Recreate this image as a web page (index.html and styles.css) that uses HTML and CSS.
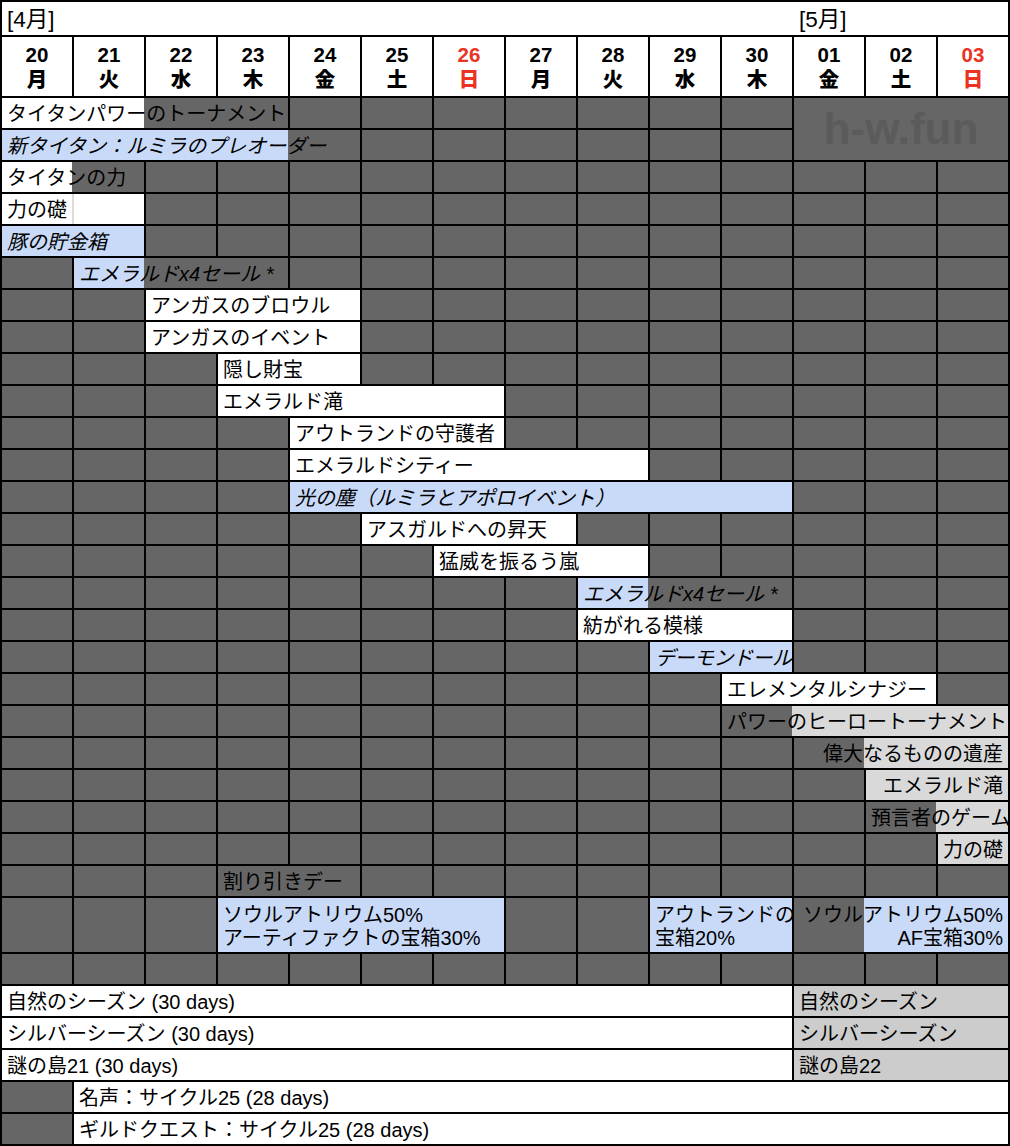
FILE: index.html
```html
<!DOCTYPE html>
<html lang="ja">
<head>
<meta charset="utf-8">
<title>イベントカレンダー</title>
<link rel="stylesheet" href="styles.css">
</head>
<body>
<div class="sheet">
  <div class="month c14"><span class="mtxt">[4月]</span><span class="mtxt">[5月]</span></div>

  <div class="day"><b>20</b><b>月</b></div>
  <div class="day"><b>21</b><b>火</b></div>
  <div class="day"><b>22</b><b>水</b></div>
  <div class="day"><b>23</b><b>木</b></div>
  <div class="day"><b>24</b><b>金</b></div>
  <div class="day"><b>25</b><b>土</b></div>
  <div class="day sun"><b>26</b><b>日</b></div>
  <div class="day"><b>27</b><b>月</b></div>
  <div class="day"><b>28</b><b>火</b></div>
  <div class="day"><b>29</b><b>水</b></div>
  <div class="day"><b>30</b><b>木</b></div>
  <div class="day"><b>01</b><b>金</b></div>
  <div class="day"><b>02</b><b>土</b></div>
  <div class="day sun"><b>03</b><b>日</b></div>

  <!-- row 1 -->
  <div class="cell ov cw s142 c4">タイタンパワーのトーナメント</div>
  <div class="d"></div><div class="d"></div><div class="d"></div><div class="d"></div><div class="d"></div><div class="d"></div><div class="d"></div>
  <div class="d mark c3 r2">h-w.fun</div>

  <!-- row 2 -->
  <div class="cell ov cb s286 c5 it">新タイタン：ルミラのプレオーダー</div>
  <div class="d"></div><div class="d"></div><div class="d"></div><div class="d"></div><div class="d"></div><div class="d"></div>

  <!-- row 3 -->
  <div class="cell ov cw s70 c2">タイタンの力</div>
  <div class="d"></div><div class="d"></div><div class="d"></div><div class="d"></div><div class="d"></div><div class="d"></div><div class="d"></div><div class="d"></div><div class="d"></div><div class="d"></div><div class="d"></div><div class="d"></div>

  <!-- row 4 -->
  <div class="cell split c2">力の礎</div>
  <div class="d"></div><div class="d"></div><div class="d"></div><div class="d"></div><div class="d"></div><div class="d"></div><div class="d"></div><div class="d"></div><div class="d"></div><div class="d"></div><div class="d"></div><div class="d"></div>

  <!-- row 5 -->
  <div class="cell b c2 it">豚の貯金箱</div>
  <div class="d"></div><div class="d"></div><div class="d"></div><div class="d"></div><div class="d"></div><div class="d"></div><div class="d"></div><div class="d"></div><div class="d"></div><div class="d"></div><div class="d"></div><div class="d"></div>

  <!-- row 6 -->
  <div class="d"></div>
  <div class="cell ov cb s70 c3 it">エメラルドx4セール *</div>
  <div class="d"></div><div class="d"></div><div class="d"></div><div class="d"></div><div class="d"></div><div class="d"></div><div class="d"></div><div class="d"></div><div class="d"></div><div class="d"></div>

  <!-- row 7 -->
  <div class="d"></div><div class="d"></div>
  <div class="cell w c3">アンガスのブロウル</div>
  <div class="d"></div><div class="d"></div><div class="d"></div><div class="d"></div><div class="d"></div><div class="d"></div><div class="d"></div><div class="d"></div><div class="d"></div>

  <!-- row 8 -->
  <div class="d"></div><div class="d"></div>
  <div class="cell w c3">アンガスのイベント</div>
  <div class="d"></div><div class="d"></div><div class="d"></div><div class="d"></div><div class="d"></div><div class="d"></div><div class="d"></div><div class="d"></div><div class="d"></div>

  <!-- row 9 -->
  <div class="d"></div><div class="d"></div><div class="d"></div>
  <div class="cell w c2">隠し財宝</div>
  <div class="d"></div><div class="d"></div><div class="d"></div><div class="d"></div><div class="d"></div><div class="d"></div><div class="d"></div><div class="d"></div><div class="d"></div>

  <!-- row 10 -->
  <div class="d"></div><div class="d"></div><div class="d"></div>
  <div class="cell w c4">エメラルド滝</div>
  <div class="d"></div><div class="d"></div><div class="d"></div><div class="d"></div><div class="d"></div><div class="d"></div><div class="d"></div>

  <!-- row 11 -->
  <div class="d"></div><div class="d"></div><div class="d"></div><div class="d"></div>
  <div class="cell w c3">アウトランドの守護者</div>
  <div class="d"></div><div class="d"></div><div class="d"></div><div class="d"></div><div class="d"></div><div class="d"></div><div class="d"></div>

  <!-- row 12 -->
  <div class="d"></div><div class="d"></div><div class="d"></div><div class="d"></div>
  <div class="cell w c5">エメラルドシティー</div>
  <div class="d"></div><div class="d"></div><div class="d"></div><div class="d"></div><div class="d"></div>

  <!-- row 13 -->
  <div class="d"></div><div class="d"></div><div class="d"></div><div class="d"></div>
  <div class="cell b c7 it">光の塵（ルミラとアポロイベント）</div>
  <div class="d"></div><div class="d"></div><div class="d"></div>

  <!-- row 14 -->
  <div class="d"></div><div class="d"></div><div class="d"></div><div class="d"></div><div class="d"></div>
  <div class="cell w c3">アスガルドへの昇天</div>
  <div class="d"></div><div class="d"></div><div class="d"></div><div class="d"></div><div class="d"></div><div class="d"></div>

  <!-- row 15 -->
  <div class="d"></div><div class="d"></div><div class="d"></div><div class="d"></div><div class="d"></div><div class="d"></div>
  <div class="cell w c3">猛威を振るう嵐</div>
  <div class="d"></div><div class="d"></div><div class="d"></div><div class="d"></div><div class="d"></div>

  <!-- row 16 -->
  <div class="d"></div><div class="d"></div><div class="d"></div><div class="d"></div><div class="d"></div><div class="d"></div><div class="d"></div><div class="d"></div>
  <div class="cell ov cb s70 c3 it">エメラルドx4セール *</div>
  <div class="d"></div><div class="d"></div><div class="d"></div>

  <!-- row 17 -->
  <div class="d"></div><div class="d"></div><div class="d"></div><div class="d"></div><div class="d"></div><div class="d"></div><div class="d"></div><div class="d"></div>
  <div class="cell w c3">紡がれる模様</div>
  <div class="d"></div><div class="d"></div><div class="d"></div>

  <!-- row 18 -->
  <div class="d"></div><div class="d"></div><div class="d"></div><div class="d"></div><div class="d"></div><div class="d"></div><div class="d"></div><div class="d"></div><div class="d"></div>
  <div class="cell b c2 it tight">デーモンドール</div>
  <div class="d"></div><div class="d"></div><div class="d"></div>

  <!-- row 19 -->
  <div class="d"></div><div class="d"></div><div class="d"></div><div class="d"></div><div class="d"></div><div class="d"></div><div class="d"></div><div class="d"></div><div class="d"></div><div class="d"></div>
  <div class="cell w c3">エレメンタルシナジー</div>
  <div class="d"></div>

  <!-- row 20 -->
  <div class="d"></div><div class="d"></div><div class="d"></div><div class="d"></div><div class="d"></div><div class="d"></div><div class="d"></div><div class="d"></div><div class="d"></div><div class="d"></div>
  <div class="cell lov cg c4 right">パワーのヒーロートーナメント</div>

  <!-- row 21 -->
  <div class="d"></div><div class="d"></div><div class="d"></div><div class="d"></div><div class="d"></div><div class="d"></div><div class="d"></div><div class="d"></div><div class="d"></div><div class="d"></div><div class="d"></div>
  <div class="cell lov cg c3 right">偉大なるものの遺産</div>

  <!-- row 22 -->
  <div class="d"></div><div class="d"></div><div class="d"></div><div class="d"></div><div class="d"></div><div class="d"></div><div class="d"></div><div class="d"></div><div class="d"></div><div class="d"></div><div class="d"></div><div class="d"></div>
  <div class="cell g c2 right">エメラルド滝</div>

  <!-- row 23 -->
  <div class="d"></div><div class="d"></div><div class="d"></div><div class="d"></div><div class="d"></div><div class="d"></div><div class="d"></div><div class="d"></div><div class="d"></div><div class="d"></div><div class="d"></div><div class="d"></div>
  <div class="cell lov cg c2 right">預言者のゲーム</div>

  <!-- row 24 -->
  <div class="d"></div><div class="d"></div><div class="d"></div><div class="d"></div><div class="d"></div><div class="d"></div><div class="d"></div><div class="d"></div><div class="d"></div><div class="d"></div><div class="d"></div><div class="d"></div><div class="d"></div>
  <div class="cell g right">力の礎</div>

  <!-- row 25 -->
  <div class="d"></div><div class="d"></div><div class="d"></div>
  <div class="cell d c2">割り引きデー</div>
  <div class="d"></div><div class="d"></div><div class="d"></div><div class="d"></div><div class="d"></div><div class="d"></div><div class="d"></div><div class="d"></div><div class="d"></div>

  <!-- row 26 -->
  <div class="d"></div><div class="d"></div><div class="d"></div>
  <div class="cell two b c4">ソウルアトリウム50%<br>アーティファクトの宝箱30%</div>
  <div class="d"></div><div class="d"></div>
  <div class="cell two b c2">アウトランドの<br>宝箱20%</div>
  <div class="cell two lov cb c3 right">ソウルアトリウム50%<br>AF宝箱30%</div>

  <!-- row 27 -->
  <div class="d"></div><div class="d"></div><div class="d"></div><div class="d"></div><div class="d"></div><div class="d"></div><div class="d"></div><div class="d"></div><div class="d"></div><div class="d"></div><div class="d"></div><div class="d"></div><div class="d"></div><div class="d"></div>

  <!-- seasons -->
  <div class="cell w c11">自然のシーズン (30 days)</div>
  <div class="cell g2 c3">自然のシーズン</div>
  <div class="cell w c11">シルバーシーズン (30 days)</div>
  <div class="cell g2 c3">シルバーシーズン</div>
  <div class="cell w c11">謎の島21 (30 days)</div>
  <div class="cell g2 c3">謎の島22</div>

  <div class="d"></div>
  <div class="cell w c13">名声：サイクル25 (28 days)</div>
  <div class="d"></div>
  <div class="cell w c13">ギルドクエスト：サイクル25 (28 days)</div>
</div>
</body>
</html>
```

FILE: styles.css
```css
* {
  box-sizing: border-box;
}

html, body {
  margin: 0;
  padding: 0;
  background: #fff;
}

.sheet {
  display: grid;
  grid-template-columns: repeat(14, 70px);
  grid-template-rows: 33px 59px repeat(25, 30px) 54px repeat(6, 30px);
  gap: 2px;
  padding: 2px;
  width: 1010px;
  background: #000;
  font-family: "Liberation Sans", "Noto Sans CJK JP", sans-serif;
  font-size: 20px;
  color: #000;
}

/* spans */
.c2 { grid-column: span 2; }
.c3 { grid-column: span 3; }
.c4 { grid-column: span 4; }
.c5 { grid-column: span 5; }
.c7 { grid-column: span 7; }
.c11 { grid-column: span 11; }
.c13 { grid-column: span 13; }
.c14 { grid-column: span 14; }
.r2 { grid-row: span 2; }

/* header */
.month {
  display: grid;
  grid-template-columns: 792px 1fr;
  background: #fff;
  font-size: 22.5px;
  line-height: 31px;
  padding-top: 2px;
}

.mtxt {
  padding-left: 5px;
  white-space: nowrap;
}

.day {
  background: #fff;
  display: flex;
  flex-direction: column;
  justify-content: center;
  align-items: center;
  line-height: 25px;
  font-size: 20.5px;
  font-weight: bold;
}

.day b {
  display: block;
}

.day.sun {
  color: #ea3323;
}

/* cells */
.d { background: #666; }
.w { background: #fff; }
.b { background: #c9daf8; }
.g { background: #d9d9d9; }
.g2 { background: #cccccc; }

.cell {
  white-space: nowrap;
  line-height: 30px;
  padding: 1px 5px 0 5px;
}

.it { font-style: italic; }
.right { text-align: right; }

.tight {
  overflow: hidden;
  letter-spacing: -0.5px;
}

.cw { --c: #fff; }
.cb { --c: #c9daf8; }
.cg { --c: #d9d9d9; }

.s70 { --s: 70px; }
.s142 { --s: 142px; }
.s286 { --s: 286px; }

/* colored cell whose text overflows to the right into dark cells */
.ov {
  background: linear-gradient(to right, var(--c) var(--s), #666 var(--s));
}

/* colored cell whose right-aligned text overflows to the left */
.lov {
  background: linear-gradient(to right, #666 70px, var(--c) 70px);
}

/* two white cells with a faint grid line between them */
.split {
  background: linear-gradient(to right, #fff 70px, #dcdcdc 70px, #dcdcdc 72px, #fff 72px);
}

.two {
  line-height: 23px;
  display: flex;
  flex-direction: column;
  justify-content: flex-end;
  padding-bottom: 2px;
}

.two.right {
  align-items: flex-end;
}

.mark {
  display: flex;
  align-items: center;
  justify-content: center;
  color: #5b5b5b;
  font-weight: bold;
  font-size: 44px;
}
```
